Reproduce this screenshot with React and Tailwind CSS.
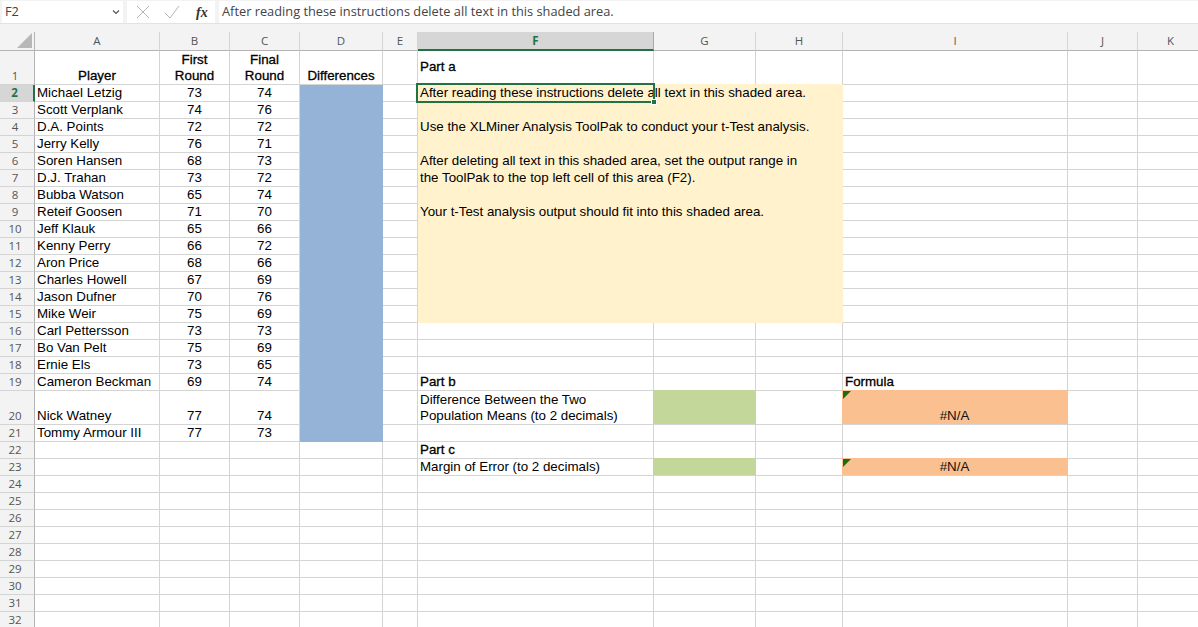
import React from "react";

const columns = ["A", "B", "C", "D", "E", "F", "G", "H", "I", "J", "K"];

const players = [
  ["Michael Letzig", 73, 74],
  ["Scott Verplank", 74, 76],
  ["D.A. Points", 72, 72],
  ["Jerry Kelly", 76, 71],
  ["Soren Hansen", 68, 73],
  ["D.J. Trahan", 73, 72],
  ["Bubba Watson", 65, 74],
  ["Reteif Goosen", 71, 70],
  ["Jeff Klauk", 65, 66],
  ["Kenny Perry", 66, 72],
  ["Aron Price", 68, 66],
  ["Charles Howell", 67, 69],
  ["Jason Dufner", 70, 76],
  ["Mike Weir", 75, 69],
  ["Carl Pettersson", 73, 73],
  ["Bo Van Pelt", 75, 69],
  ["Ernie Els", 73, 65],
  ["Cameron Beckman", 69, 74],
  ["Nick Watney", 77, 74],
  ["Tommy Armour III", 77, 73],
];

// cells with content, keyed by column + row
const cells = {
  A1: { text: "Player", bold: true, center: true },
  B1: { text: ["First", "Round"], bold: true, center: true },
  C1: { text: ["Final", "Round"], bold: true, center: true },
  D1: { text: "Differences", bold: true, center: true },
  F1: { text: "Part a", bold: true, middle: true },
  F19: { text: "Part b", bold: true },
  I19: { text: "Formula", bold: true },
  F20: { text: ["Difference Between the Two", "Population Means (to 2 decimals)"] },
  F22: { text: "Part c", bold: true },
  F23: { text: "Margin of Error (to 2 decimals)" },
};

players.forEach((p, i) => {
  const row = i + 2;
  cells[`A${row}`] = { text: p[0] };
  cells[`B${row}`] = { text: String(p[1]), center: true };
  cells[`C${row}`] = { text: String(p[2]), center: true };
});

const rows = Array.from({ length: 32 }, (_, i) => i + 1);

function covered(col, row) {
  if (col === "D" && row >= 2 && row <= 21) return true;
  if (["F", "G", "H"].includes(col) && row >= 2 && row <= 15) return true;
  return false;
}

function Cell({ col, row }) {
  const c = cells[`${col}${row}`];
  const isAnswer = col === "G" && (row === 20 || row === 23);
  const isFormula = col === "I" && (row === 20 || row === 23);
  let fill = "";
  if (isAnswer) fill = "-ml-px -mt-px border-r-transparent bg-[#c4d79b]";
  if (isFormula) fill = "-ml-px -mt-px border-r-transparent bg-[#fac090]";
  return (
    <div
      className={`relative flex min-w-0 flex-col overflow-visible whitespace-nowrap border-r border-b border-[#d4d4d4] px-[2px] text-[13.33px] leading-[16px] text-black ${
        c && c.middle ? "justify-center pb-[2px]" : "justify-end"
      } ${c && c.center ? "items-center" : "items-start"} ${c && c.bold ? "[-webkit-text-stroke:0.3px_black]" : ""} ${fill}`}
      style={{ gridColumnStart: columns.indexOf(col) + 2, gridRowStart: row + 1 }}
    >
      {c && (Array.isArray(c.text) ? c.text.map((t) => <div key={t}>{t}</div>) : <div>{c.text}</div>)}
      {isFormula && (
        <>
          <svg className="absolute left-px top-px" width="8" height="8" viewBox="0 0 8 8">
            <polygon points="0,0 8,0 0,8" fill="#1d6b13" />
          </svg>
          <div className="w-full text-center text-[#111]">#N/A</div>
        </>
      )}
    </div>
  );
}

export default function App() {
  return (
    <div className="h-[627px] w-[1198px] overflow-hidden bg-[#f3f3f3] font-['Liberation_Sans',sans-serif]">
      {/* begin::Formula bar */}
      <div className="flex h-[24px] gap-[4px] border-b border-[#e2e2e2] pl-[2px] pt-px font-['Open_Sans',sans-serif] text-[12.8px] text-[#444]">
        <div className="flex w-[121px] items-center justify-between bg-white pl-[3px] pr-[3px]">
          <span>F2</span>
          <svg width="8" height="8" viewBox="0 0 8 8" fill="none" stroke="#555" strokeWidth="1.2">
            <path d="M1 2.5 L4 5.5 L7 2.5" />
          </svg>
        </div>
        <div className="flex w-[88px] items-center bg-white pl-[9px]">
          <svg width="14" height="14" viewBox="0 0 14 14" fill="none" stroke="#b4b4b4" strokeWidth="1">
            <path d="M1 1 L13 13 M13 1 L1 13" />
          </svg>
          <svg className="ml-[14px]" width="16" height="14" viewBox="0 0 16 14" fill="none" stroke="#b4b4b4" strokeWidth="1">
            <path d="M1 8 L6 13 L15 1" />
          </svg>
          <span className="ml-[16px] font-['Liberation_Serif',serif] text-[14px] font-bold italic text-[#333]">fx</span>
        </div>
        <div className="flex flex-1 items-center bg-white pl-[3px]">
          After reading these instructions delete all text in this shaded area.
        </div>
      </div>
      {/* end::Formula bar */}

      {/* begin::Sheet */}
      <div className="mt-[8px] grid grid-cols-[35px_125px_70px_70px_83px_35px_236px_102px_87px_225px_70px_66px] grid-rows-[19px_34px_repeat(18,17px)_34px_repeat(12,17px)] bg-white">
        <div className="flex items-end justify-end border-r border-b border-[#b4b4b4] bg-[#f3f3f3] pb-[2px] pr-[2px]">
          <svg width="15" height="15" viewBox="0 0 15 15">
            <polygon points="15,0 15,15 0,15" fill="#b7b7b7" />
          </svg>
        </div>

        {columns.map((col) => (
          <div
            key={col}
            className={`flex items-center justify-center font-['Open_Sans',sans-serif] text-[11.5px] ${
              col === "F"
                ? "border-b-2 border-r border-b-[#217346] border-r-[#a8a8a8] bg-[#d6d6d6] font-bold text-[#217346]"
                : "border-b border-r border-b-[#b4b4b4] border-r-[#d4d4d4] bg-[#f3f3f3] text-[#555]"
            }`}
          >
            {col}
          </div>
        ))}

        {rows.map((row) => (
          <React.Fragment key={row}>
            <div
              className={`flex items-end justify-center pr-[4px] font-['Open_Sans',sans-serif] text-[11.5px] leading-[16px] ${
                row === 2
                  ? "border-r-2 border-b border-r-[#217346] border-b-[#d4d4d4] bg-[#d6d6d6] font-bold text-[#217346]"
                  : "border-r border-b border-r-[#b4b4b4] border-b-[#d4d4d4] bg-[#f3f3f3] text-[#555]"
              }`}
              style={{ gridColumnStart: 1, gridRowStart: row + 1 }}
            >
              {row}
            </div>
            {columns.map((col) =>
              covered(col, row) ? null : <Cell key={col} col={col} row={row} />
            )}
          </React.Fragment>
        ))}

        {/* Differences column fill */}
        <div className="col-start-5 col-end-6 row-start-3 row-end-23 -ml-px -mt-px bg-[#95b3d7]" />

        {/* Part a shaded area */}
        <div className="relative col-start-7 col-end-10 row-start-3 row-end-17 -mt-px bg-[#fff2cc] px-[2px] text-[13.33px] leading-[17px] text-black">
          <div>After reading these instructions delete all text in this shaded area.</div>
          <div className="mt-[17px]">Use the XLMiner Analysis ToolPak to conduct your t-Test analysis.</div>
          <div className="mt-[17px]">After deleting all text in this shaded area, set the output range in</div>
          <div>the ToolPak to the top left cell of this area (F2).</div>
          <div className="mt-[17px]">Your t-Test analysis output should fit into this shaded area.</div>
          <div className="absolute -left-[2px] -top-px h-[20px] w-[239px] border-2 border-[#217346]" />
          <div className="absolute left-[233px] top-[15px] h-[6px] w-[6px] border border-white bg-[#217346]" />
        </div>
      </div>
      {/* end::Sheet */}
    </div>
  );
}
